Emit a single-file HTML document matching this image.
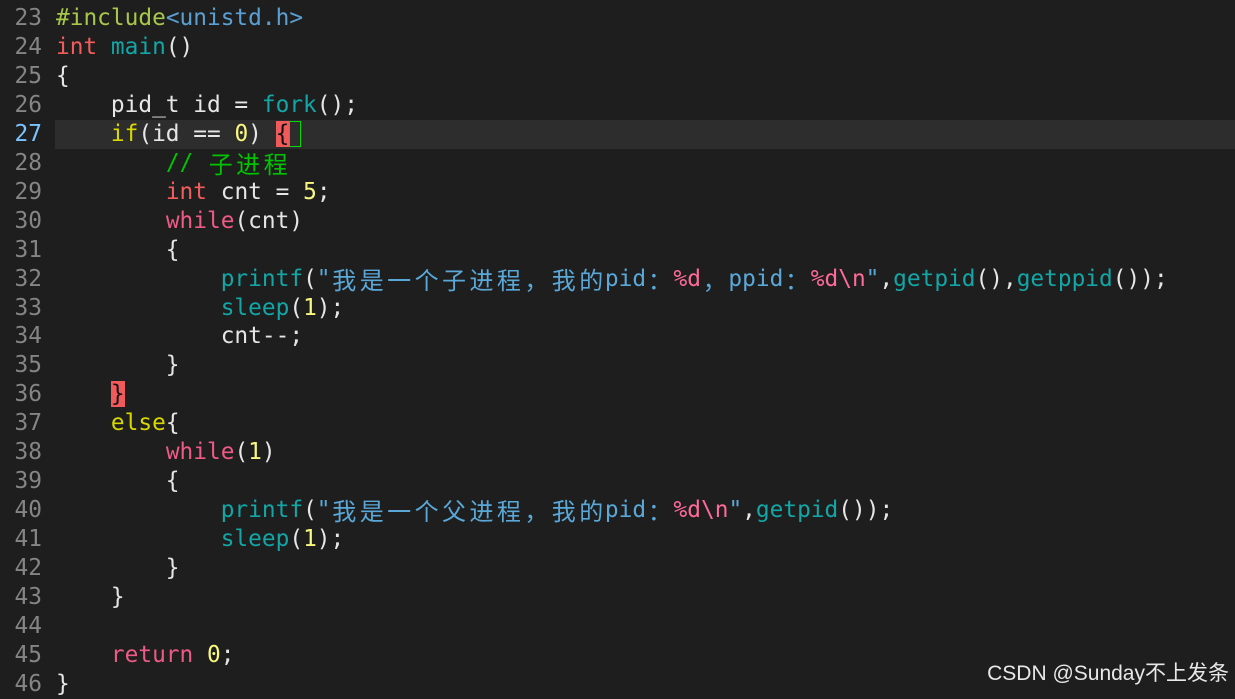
<!DOCTYPE html>
<html><head><meta charset="utf-8"><style>
body{margin:0;background:#1e1e1e;width:1235px;height:693px;overflow:hidden;position:relative}
.c{position:absolute;left:0;top:4px;width:1235px;font-family:"DejaVu Sans Mono","Noto Sans CJK SC",monospace;font-size:22.8px;color:#e6e6e6}
.l{height:28.96px;line-height:28.96px;position:relative;white-space:pre;overflow:hidden}
.n{display:inline-block;width:42px;text-align:right;color:#858585;margin-right:14px}
.cur{background:linear-gradient(to right,transparent 55px,#2d2d2d 55px)}
.cur .n{color:#7cc4ff}
.k{color:#f45c5c}.f{color:#12a6a6}.y{color:#d8d800}.num{color:#f8f880}.cm{color:#00c400}
.s{color:#5aa8d8}.e{color:#ff6a9a}.w{color:#ee5a86}.inc{color:#a8c84a}.hd{color:#5aa0d4}
.b{background:#f05a5a;color:#111}
.z{display:inline-block;width:27.45px;height:28.96px;line-height:28.96px;vertical-align:top;text-align:center;font-family:"Noto Sans CJK SC",sans-serif;font-size:24px}
.box{display:inline-block;width:12px;height:26px;border:1px solid #00dd00;vertical-align:-6px;box-sizing:border-box}
.wm{position:absolute;right:6px;bottom:6px;font-family:"Liberation Sans","Noto Sans CJK SC",sans-serif;font-size:21px;color:#e8e8e8}
</style></head><body>
<div class="c"><div class="l"><span class="n">23</span><span class="inc">#include</span><span class="hd">&lt;unistd.h&gt;</span></div><div class="l"><span class="n">24</span><span class="k">int</span> <span class="f">main</span>()</div><div class="l"><span class="n">25</span>{</div><div class="l"><span class="n">26</span>    pid_t id = <span class="f">fork</span>();</div><div class="l cur"><span class="n">27</span>    <span class="y">if</span>(id == <span class="num">0</span>) <span class="b">{</span><span class="box"></span></div><div class="l"><span class="n">28</span>        <span class="cm">// <span class="z">子</span><span class="z">进</span><span class="z">程</span></span></div><div class="l"><span class="n">29</span>        <span class="k">int</span> cnt = <span class="num">5</span>;</div><div class="l"><span class="n">30</span>        <span class="w">while</span>(cnt)</div><div class="l"><span class="n">31</span>        {</div><div class="l"><span class="n">32</span>            <span class="f">printf</span>(<span class="s">"<span class="z">我</span><span class="z">是</span><span class="z">一</span><span class="z">个</span><span class="z">子</span><span class="z">进</span><span class="z">程</span><span class="z">，</span><span class="z">我</span><span class="z">的</span>pid<span class="z">：</span></span><span class="e">%d</span><span class="s"><span class="z">，</span>ppid<span class="z">：</span></span><span class="e">%d\n</span><span class="s">"</span>,<span class="f">getpid</span>(),<span class="f">getppid</span>());</div><div class="l"><span class="n">33</span>            <span class="f">sleep</span>(<span class="num">1</span>);</div><div class="l"><span class="n">34</span>            cnt--;</div><div class="l"><span class="n">35</span>        }</div><div class="l"><span class="n">36</span>    <span class="b">}</span></div><div class="l"><span class="n">37</span>    <span class="y">else</span>{</div><div class="l"><span class="n">38</span>        <span class="w">while</span>(<span class="num">1</span>)</div><div class="l"><span class="n">39</span>        {</div><div class="l"><span class="n">40</span>            <span class="f">printf</span>(<span class="s">"<span class="z">我</span><span class="z">是</span><span class="z">一</span><span class="z">个</span><span class="z">父</span><span class="z">进</span><span class="z">程</span><span class="z">，</span><span class="z">我</span><span class="z">的</span>pid<span class="z">：</span></span><span class="e">%d\n</span><span class="s">"</span>,<span class="f">getpid</span>());</div><div class="l"><span class="n">41</span>            <span class="f">sleep</span>(<span class="num">1</span>);</div><div class="l"><span class="n">42</span>        }</div><div class="l"><span class="n">43</span>    }</div><div class="l"><span class="n">44</span></div><div class="l"><span class="n">45</span>    <span class="w">return</span> <span class="num">0</span>;</div><div class="l"><span class="n">46</span>}</div></div>
<div class="wm">CSDN @Sunday不上发条</div>
</body></html>
